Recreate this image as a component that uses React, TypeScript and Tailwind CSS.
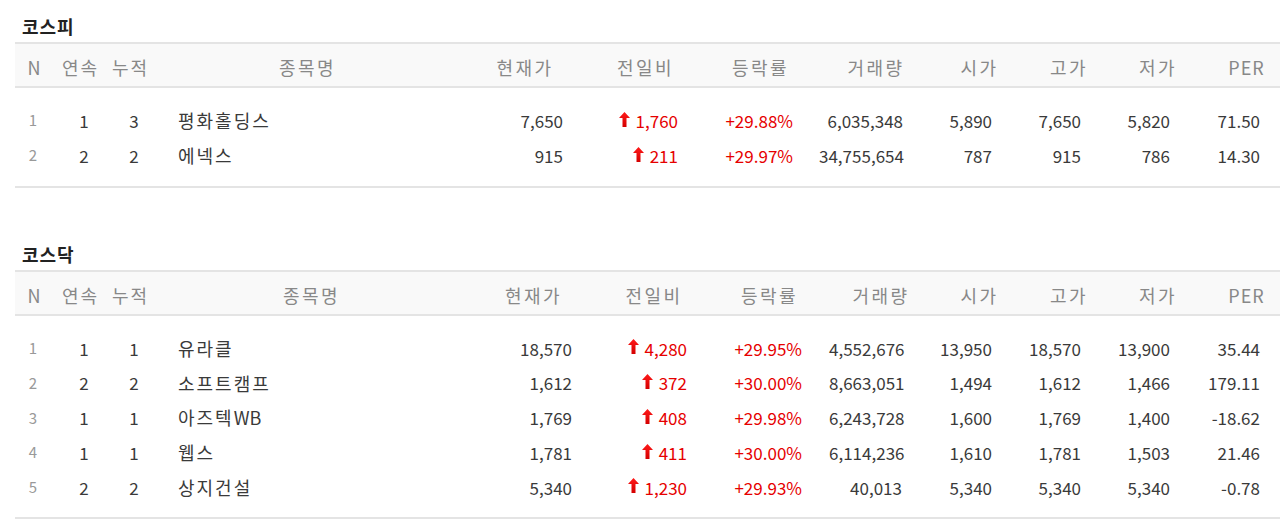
import React from 'react'

type Row = {
  n: number
  streak: number
  total: number
  name: string
  price: string
  diff: string
  rate: string
  volume: string
  open: string
  high: string
  low: string
  per: string
}

const HEADERS = ['현재가', '전일비', '등락률', '거래량', '시가', '고가', '저가', 'PER']

const kospi: Row[] = [
  { n: 1, streak: 1, total: 3, name: '평화홀딩스', price: '7,650', diff: '1,760', rate: '+29.88%', volume: '6,035,348', open: '5,890', high: '7,650', low: '5,820', per: '71.50' },
  { n: 2, streak: 2, total: 2, name: '에넥스', price: '915', diff: '211', rate: '+29.97%', volume: '34,755,654', open: '787', high: '915', low: '786', per: '14.30' },
]

const kosdaq: Row[] = [
  { n: 1, streak: 1, total: 1, name: '유라클', price: '18,570', diff: '4,280', rate: '+29.95%', volume: '4,552,676', open: '13,950', high: '18,570', low: '13,900', per: '35.44' },
  { n: 2, streak: 2, total: 2, name: '소프트캠프', price: '1,612', diff: '372', rate: '+30.00%', volume: '8,663,051', open: '1,494', high: '1,612', low: '1,466', per: '179.11' },
  { n: 3, streak: 1, total: 1, name: '아즈텍WB', price: '1,769', diff: '408', rate: '+29.98%', volume: '6,243,728', open: '1,600', high: '1,769', low: '1,400', per: '-18.62' },
  { n: 4, streak: 1, total: 1, name: '웹스', price: '1,781', diff: '411', rate: '+30.00%', volume: '6,114,236', open: '1,610', high: '1,781', low: '1,503', per: '21.46' },
  { n: 5, streak: 2, total: 2, name: '상지건설', price: '5,340', diff: '1,230', rate: '+29.93%', volume: '40,013', open: '5,340', high: '5,340', low: '5,340', per: '-0.78' },
]

// column widths differ a little between the two tables (auto layout in the original)
const layouts = {
  kospi: {
    grid: 'grid grid-cols-[39px_51px_49px_305px_130px_111px_119px_112px_95px_84px_94px_76px]',
    pad: ['pr-[26px]', 'pr-[22px]', 'pr-[26px]', 'pr-[28px]', 'pr-[34px]', 'pr-[29px]', 'pr-[34px]', 'pr-[20px]'],
    rowH: 'h-[35px]',
    pb: 'pb-[13px]',
  },
  kosdaq: {
    grid: 'grid grid-cols-[39px_51px_49px_313px_131px_110px_121px_102px_95px_84px_94px_76px]',
    pad: ['pr-[26px]', 'pr-[21px]', 'pr-[27px]', 'pr-[29px]', 'pr-[34px]', 'pr-[29px]', 'pr-[34px]', 'pr-[20px]'],
    rowH: 'h-[34.75px]',
    pb: 'pb-[12px]',
  },
}

function UpArrow() {
  return (
    <svg width="11" height="15" viewBox="0 0 11 15" className="mr-[6px] -mt-[3px] shrink-0">
      <defs>
        <linearGradient id="upg" x1="0" y1="0" x2="0" y2="1">
          <stop offset="0" stopColor="#ff1a1a" />
          <stop offset="1" stopColor="#d40000" />
        </linearGradient>
      </defs>
      <path d="M5.5 0 L11 6 L7.5 6 L7.5 15 L3.5 15 L3.5 6 L0 6 Z" fill="url(#upg)" />
    </svg>
  )
}

// hangul runs get a little tracking, latin letters stay tight
function StockName({ name }: { name: string }) {
  const parts = name.match(/[A-Za-z0-9]+|[^A-Za-z0-9]+/g) ?? [name]
  return (
    <>
      {parts.map((p, i) =>
        /^[A-Za-z0-9]+$/.test(p) ? (
          <span key={i}>{p}</span>
        ) : (
          <span key={i} className="tracking-[2px]">{p}</span>
        ),
      )}
    </>
  )
}

function StockTable({ title, rows, kind }: { title: string; rows: Row[]; kind: 'kospi' | 'kosdaq' }) {
  const l = layouts[kind]
  return (
    <section>
      <h3 className="pl-[22px] h-[20px] leading-[20px] text-[18px] tracking-[1px] font-bold text-[#222] mb-[6px]">{title}</h3>
      <div className="ml-[15px] border-t-2 border-b-2 border-[#e4e4e4]">
        {/* header */}
        <div className={`${l.grid} h-[44px] bg-[#f9f9f9] border-b-2 border-[#e4e4e4] items-center pt-[4px] text-[#888] text-[18px]`}>
          <div className="text-center pr-[1px]">N</div>
          <div className="text-center tracking-[2px] pl-[2px]">연속</div>
          <div className="text-center tracking-[2px] pl-[2px]">누적</div>
          <div className="text-center tracking-[2.5px] pl-[2px]">종목명</div>
          {HEADERS.map((h, i) => (
            <div key={h} className={i === 7 ? 'text-center pl-[9px] tracking-[1px]' : 'text-center tracking-[2.5px] pl-[2px]'}>{h}</div>
          ))}
        </div>
        {/* body */}
        <div className={`pt-[15px] ${l.pb} text-[17px] text-[#3a3a3a]`}>
          {rows.map((r) => {
            const cells = [r.price, r.diff, r.rate, r.volume, r.open, r.high, r.low, r.per]
            return (
              <div key={r.n} className={`${l.grid} ${l.rowH} items-center`}>
                <div className="text-center text-[15px] text-[#999] pr-[3px]">{r.n}</div>
                <div className="text-center pl-[9px]">{r.streak}</div>
                <div className="text-center pl-[9px]">{r.total}</div>
                <div className="pl-[24px] text-[18px]">
                  <StockName name={r.name} />
                </div>
                {cells.map((c, i) => {
                  if (i === 1) {
                    return (
                      <div key={i} className={`flex items-center justify-end text-[#e60000] ${l.pad[i]}`}>
                        <UpArrow />
                        <span>{c}</span>
                      </div>
                    )
                  }
                  return (
                    <div key={i} className={`text-right ${l.pad[i]} ${i === 2 ? 'text-[#e60000]' : ''}`}>
                      {c}
                    </div>
                  )
                })}
              </div>
            )
          })}
        </div>
      </div>
    </section>
  )
}

export default function App() {
  return (
    <div
      className="w-[1280px] h-[523px] bg-white overflow-hidden pt-[16px]"
      style={{ fontFamily: '"Noto Sans CJK KR", "Noto Sans", sans-serif' }}
    >
      <StockTable title="코스피" rows={kospi} kind="kospi" />
      <div className="mt-[56px]">
        <StockTable title="코스닥" rows={kosdaq} kind="kosdaq" />
      </div>
    </div>
  )
}
